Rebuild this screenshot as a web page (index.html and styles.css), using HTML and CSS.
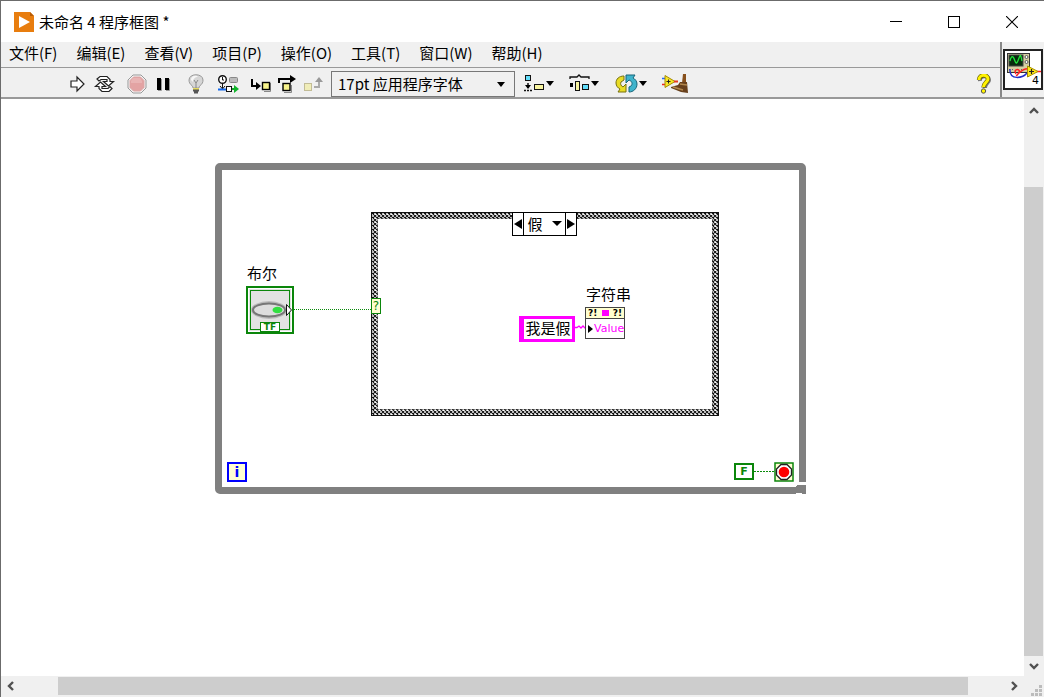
FILE: index.html
```html
<!DOCTYPE html>
<html lang="zh-CN">
<head>
<meta charset="utf-8">
<title>未命名 4 程序框图 *</title>
<link rel="stylesheet" href="styles.css">
</head>
<body>
<div class="window">
  <header class="titlebar">
    <svg class="app-icon" width="20" height="20" viewBox="0 0 20 20"><path d="M0 0H16L20 4V20H0Z" fill="#e87d0e"/><path d="M16 0L20 4H16Z" fill="#b85c05"/><path d="M5 4L16 10L5 16Z" fill="#fff"/></svg>
    <h1 class="title">未命名 4 程序框图 *</h1>
    <div class="window-controls">
      <button class="win-btn" aria-label="最小化"><svg width="12" height="12"><path d="M0 5.500H12" stroke="#000"/></svg></button>
      <button class="win-btn" aria-label="最大化"><svg width="12" height="12"><rect x=".5" y=".5" width="11" height="11" fill="none" stroke="#000"/></svg></button>
      <button class="win-btn" aria-label="关闭"><svg width="12" height="12"><path d="M0 0L12 12M12 0L0 12" stroke="#000" stroke-width="1.100"/></svg></button>
    </div>
  </header>

  <div class="header">
    <div class="bars">
      <nav class="menubar">
        <button class="menu">文件(F)</button><button class="menu">编辑(E)</button><button class="menu">查看(V)</button><button class="menu">项目(P)</button><button class="menu">操作(O)</button><button class="menu">工具(T)</button><button class="menu">窗口(W)</button><button class="menu">帮助(H)</button>
      </nav>
      <div class="toolbar">
        <div class="tools">
          <div class="group">
            <button class="tool" aria-label="运行"><svg width="24" height="20"><path d="M5 7H11V3L18 10L11 17V13H5Z" fill="#fff" stroke="#222" stroke-width="1.200"/></svg></button>
            <button class="tool" aria-label="连续运行"><svg width="24" height="20"><path d="M4 5L7 2.500H14L17 5.500V7.500H20.500L15.500 12L10.500 7.500H14V5.500H8L6 7Z" fill="#fff" stroke="#222" stroke-width="1.200"/><path d="M19 14.500L16 17.500H9L6 14.500V12.500H2.500L7.500 8L12.500 12.500H9V14.500H15L17 12.500Z" fill="#fff" stroke="#222" stroke-width="1.200"/></svg></button>
          </div>
          <div class="group">
            <button class="tool" aria-label="中止执行" disabled><svg width="24" height="20"><path d="M8 1H16L21 6V14L16 19H8L3 14V6Z" fill="#f4f4f4" stroke="#999"/><path d="M8.500 3H15.500L19 6.500V13.500L15.500 17H8.500L5 13.500V6.500Z" fill="#e3a3a3" stroke="#dba6a6"/><path d="M8 4H15L17 7V9H6V7Z" fill="#e9b4b4"/></svg></button>
            <button class="tool" aria-label="暂停"><svg width="24" height="20"><path d="M5 4H9V16H5ZM13 4H17V16H13Z" fill="#000"/><path d="M9.500 5V16.500H6M17.500 5V16.500H14" stroke="#999" fill="none"/></svg></button>
          </div>
          <div class="group">
            <button class="tool" aria-label="高亮显示执行过程"><svg width="24" height="20"><path d="M9 14C9 11 5 11 5 6C5-1 19-1 19 6C19 11 15 11 15 14Z" fill="#d6d6d6" stroke="#999"/><path d="M7 6C7 1 13 1 14 3C11 3 9 5 9 8Z" fill="#f6f6f6"/><path d="M10 6L12 9L14 6M12 9V14" stroke="#888" fill="none"/><path d="M9 14H15V16H9Z" fill="#e5da62"/><path d="M9 16.500H15M10 18.500H14" stroke="#555" stroke-width="2"/></svg></button>
          </div>
          <div class="group">
            <button class="tool" aria-label="保存连线值"><svg width="24" height="20"><circle cx="6.500" cy="5.500" r="3.800" fill="#fff" stroke="#111" stroke-width="1.400"/><path d="M6.500 3V6H8M6.500 9V15M4 12L6.500 15L9 12" stroke="#111" fill="none"/><rect x="13.500" y="3.500" width="8" height="5" rx="1" fill="#bbb" stroke="#888"/><path d="M2 15.500H10" stroke="#1368ed" stroke-width="2"/><rect x="10.500" y="12.500" width="5" height="5" fill="#fff" stroke="#111"/><path d="M16 15H20" stroke="#14a829" stroke-width="2"/><path d="M18 11L23 15L18 19Z" fill="#10b52b"/></svg></button>
          </div>
          <div class="group">
            <button class="tool" aria-label="单步步入"><svg width="24" height="20"><path d="M4 5V12H11" stroke="#000" stroke-width="2" fill="none"/><path d="M8 8L13 12L8 16Z"/><path d="M16 17.500H22.500V9" stroke="#888" fill="none"/><rect x="14.500" y="8.500" width="7" height="7" fill="#f8f48c" stroke="#000" stroke-width="1.400"/></svg></button>
            <button class="tool" aria-label="单步步过"><svg width="24" height="20"><path d="M4 9V5H17" stroke="#000" stroke-width="2" fill="none"/><path d="M15 1L21 5L15 9Z"/><path d="M9 18.500H16.500V11" stroke="#888" fill="none"/><rect x="8" y="9.500" width="7" height="7" fill="#f8f48c" stroke="#000" stroke-width="1.400"/></svg></button>
            <button class="tool" aria-label="单步步出" disabled><svg width="24" height="20"><rect x="2.500" y="9.500" width="7" height="7" fill="#f0edb8" stroke="#c2bc96"/><path d="M12 13H17V7" stroke="#aaa" stroke-width="2" fill="none"/><path d="M13 8L17 3L21 8Z" fill="#999"/></svg></button>
          </div>
        </div>
        <label class="font-picker">
          <select class="font-select" aria-label="文本设置"><option>17pt 应用程序字体</option></select>
          <svg class="font-arrow" width="8" height="5"><path d="M0 0H8L4 5Z"/></svg>
        </label>
        <div class="layout-tools">
          <button class="wide-tool" aria-label="对齐对象"><svg width="32" height="20"><rect x="2.500" y="1.500" width="5" height="5" fill="#62ddfa" stroke="#111"/><path d="M5 9V14M1 16.500H9" stroke="#111" stroke-width="1.500" stroke-dasharray="2 1"/><path d="M2 11H8L5 15Z"/><rect x="11.500" y="10.500" width="9" height="5" fill="#f7f4a0" stroke="#111"/><path d="M23 7H31L27 12Z"/></svg></button>
          <button class="wide-tool" aria-label="分布对象"><svg width="32" height="20"><path d="M1 5V3H8L10 1L12 3H20V5" stroke="#111" fill="none" stroke-width="1.300"/><path d="M1 9H4V13H1Z"/><rect x="6.500" y="7.500" width="4" height="9" fill="#f7f4a0" stroke="#111"/><rect x="13.500" y="10.500" width="6" height="5" fill="#62ddfa" stroke="#111"/><path d="M22 7H30L26 12Z"/></svg></button>
          <button class="wide-tool" aria-label="重新排序"><svg width="32" height="20"><path d="M9 2C4 2 1 5 1 9C1 12 3 14 5 15L3 18H11V10L8 13C6 12 5 10 6 8L9 6Z" fill="#e9dc25" stroke="#76710d"/><path d="M14 18C18 18 22 15 22 10C22 7 20 5 18 4L20 1H11V9L14 6C17 7 18 10 16 12L14 13Z" fill="#40b4cc" stroke="#176579"/><path d="M24 7H32L28 12Z"/></svg></button>
          <button class="wide-tool" aria-label="整理程序框图"><svg width="32" height="20"><path d="M1 4.500H5" stroke="#26f" stroke-width="1.500"/><path d="M1 10.500H5" stroke="#e22" stroke-width="1.500"/><path d="M4 1.500L14 7.500L4 13.500Z" fill="#f8e626" stroke="#a58a05"/><path d="M7.500 5.500V9.500M5.500 7.500H9.500" stroke="#222"/><path d="M13 7.500H17" stroke="#e63b20" stroke-width="2"/><path d="M22 0L25 0L25 9H21Z" fill="#87501c"/><path d="M10 13L17 11L19 8H26L27 19L20 18L10 14Z" fill="#68401c"/><path d="M12 13L22 16M19 10L26 11" stroke="#b2874d" stroke-width="1.500"/></svg></button>
        </div>
        <button class="help" aria-label="显示即时帮助"><svg width="16" height="20"><path d="M4 7C3 1 13 1 13 6C13 9 9 9 9 14" fill="none" stroke="#777" stroke-width="4"/><path d="M3 6C3 0 12 0 12 5C12 8 7.500 9 7.500 13.500" fill="none" stroke="#6d6700" stroke-width="4.400"/><path d="M3 6C3 0 12 0 12 5C12 8 7.500 9 7.500 13" fill="none" stroke="#fff200" stroke-width="3"/><circle cx="7.500" cy="17" r="2.200" fill="#fff200" stroke="#555"/></svg></button>
      </div>
    </div>
    <div class="vi-pane">
      <button class="vi-icon" aria-label="VI 图标">
        <svg width="36" height="37"><rect x="2.500" y="2.500" width="22" height="19" fill="#d5cfa2" stroke="#333"/><rect x="4" y="4" width="14" height="11" fill="#062c0c" stroke="#444"/><path d="M5 10C7 2 9 7 10 10S12 13 14 7S16 7 17 10" fill="none" stroke="#21e43a" stroke-width="1.300"/><circle cx="21.500" cy="6" r="1.500" fill="#fff" stroke="#555"/><circle cx="21.500" cy="11" r="1.500" fill="#fff" stroke="#555"/><path d="M4 18.500H8M16 18.500H20" stroke="#666" stroke-dasharray="1 2"/><path d="M5 18C4 30 18 27 22 22" fill="none" stroke="#222fc8" stroke-width="1.500"/><path d="M11 23C7 17 18 17 13 23S17 16 24 18M31 20.500H36" fill="none" stroke="#f22" stroke-width="1.500"/><path d="M22.500 15L33 20.500L22.500 26Z" fill="#ffe815" stroke="#a79100"/><path d="M26.500 18V23M24 20.500H29" stroke="#222" stroke-width="1.200"/></svg>
        <span class="vi-number">4</span>
      </button>
    </div>
  </div>

  <div class="workspace">
    <main class="canvas">
      <section class="while-loop" aria-label="While 循环"></section>
      <svg class="loop-corner" width="13" height="13"><path d="M0 0H13V13H0Z" fill="#fff"/><path d="M3 0H10V1H3ZM0 5H1V4H10V13H6V12H0Z" fill="#808080"/></svg>

      <svg class="case-frame" width="348" height="204">
        <defs><pattern id="chain" width="4" height="4" patternUnits="userSpaceOnUse"><rect width="4" height="4" fill="#fff"/><path d="M0 0L4 4M4 0L0 4" stroke="#111" stroke-width="1.100"/></pattern></defs>
        <path d="M0 0H348V204H0ZM7 7V197H341V7Z" fill="url(#chain)" fill-rule="evenodd"/>
        <path d="M.5.5H347.500V203.500H.5Z" fill="none" stroke="#111"/>
        <path d="M6.500 6.500H341.500V197.500H6.500Z" fill="none" stroke="#444" stroke-dasharray="2 2"/>
      </svg>
      <div class="case-selector">
        <button class="case-step" aria-label="上一分支"><svg width="8" height="10"><path d="M8 0V10L0 5Z"/></svg></button>
        <button class="case-label">假<svg width="10" height="6"><path d="M0 0H10L5 5Z"/></svg></button>
        <button class="case-step" aria-label="下一分支"><svg width="8" height="10"><path d="M0 0V10L8 5Z"/></svg></button>
      </div>

      <svg class="wire-bool" width="78" height="2"><path d="M0 .5H78" stroke="#0a8a0a" stroke-dasharray="1 1"/></svg>
      <span class="case-terminal">?</span>

      <span class="label label-bool">布尔</span>
      <div class="bool-node">
        <svg width="48" height="48">
          <rect x="1" y="1" width="46" height="46" fill="#e2e2e2" stroke="#0b860b" stroke-width="2"/>
          <rect x="2.500" y="2.500" width="43" height="43" fill="none" stroke="#fff"/>
          <rect x="4.500" y="4.500" width="39" height="39" fill="none" stroke="#0b860b"/>
          <ellipse cx="23" cy="24" rx="18" ry="9" fill="#bbb"/>
          <ellipse cx="23" cy="24" rx="16" ry="6.500" fill="#ddd" stroke="#777" stroke-width="2"/>
          <ellipse cx="31.500" cy="24" rx="5" ry="3.200" fill="#32df41"/>
          <path d="M40.500 18.500L45.500 24L40.500 29.500Z" fill="#fff" stroke="#111"/>
        </svg>
        <span class="bool-type">TF</span>
      </div>

      <span class="label label-string">字符串</span>
      <input class="string-constant" value="我是假" aria-label="字符串常量">
      <svg class="wire-string" width="12" height="5"><path d="M0 2.500H2L4 1L6 3L8 1L10 3L12 2" fill="none" stroke="#f0f" stroke-width="1.300"/></svg>
      <div class="property-node">
        <div class="property-head"><span>?!</span><i class="property-dot"></i><span>?!</span></div>
        <div class="property-row"><svg width="5" height="8"><path d="M0 0L5 4L0 8Z"/></svg><span>Value</span></div>
      </div>

      <span class="iteration">i</span>
      <button class="false-constant">F</button>
      <svg class="wire-stop" width="20" height="2"><path d="M0 .5H20" stroke="#0a8a0a" stroke-dasharray="2 1"/></svg>
      <svg class="stop-node" width="20" height="20"><rect x="1" y="1" width="18" height="18" fill="#ffffd2" stroke="#0b860b" stroke-width="1.500"/><path d="M7 2.500H13L17.500 7V13L13 17.500H7L2.500 13V7Z" fill="#fff" stroke="#222" stroke-width="1.300"/><circle cx="10" cy="10" r="5.300" fill="#f00"/></svg>
    </main>
    <div class="scroll-v">
      <button class="arrow arrow-up" aria-label="向上滚动"><svg width="10" height="8"><path d="M1 6L5 2L9 6" fill="none" stroke="#505050" stroke-width="2.400"/></svg></button>
      <div class="track-v"><div class="thumb-v"></div></div>
      <button class="arrow" aria-label="向下滚动"><svg width="10" height="8"><path d="M1 2L5 6L9 2" fill="none" stroke="#505050" stroke-width="2.400"/></svg></button>
    </div>
    <div class="scroll-h">
      <button class="arrow" aria-label="向左滚动"><svg width="8" height="10"><path d="M6 1L2 5L6 9" fill="none" stroke="#505050" stroke-width="2.400"/></svg></button>
      <div class="track-h"><div class="thumb-h"></div></div>
      <button class="arrow" aria-label="向右滚动"><svg width="8" height="10"><path d="M2 1L6 5L2 9" fill="none" stroke="#505050" stroke-width="2.400"/></svg></button>
    </div>
    <div class="grip"><svg width="11" height="11"><path d="M8 0H11V3H8ZM4 4H7V7H4ZM8 4H11V7H8ZM0 8H3V11H0ZM4 8H7V11H4ZM8 8H11V11H8Z" fill="#bcbcbc"/></svg></div>
  </div>
</div>
</body>
</html>
```

FILE: styles.css
```css
* { box-sizing: border-box; }
body {
  margin: 0;
  color: #000;
  font: 15px/20px "Noto Sans CJK SC", sans-serif;
}
button, select, input { margin: 0; padding: 0; border: 0; background: none; color: inherit; font: inherit; border-radius: 0; }
svg { display: block; flex: none; }

.window {
  display: flex;
  flex-direction: column;
  height: 100vh;
  border-top: 1px solid #6b6b6b;
  border-left: 1px solid #6b6b6b;
  overflow: hidden;
  background: #fff;
}

.titlebar { display: flex; align-items: center; height: 41px; padding-left: 13px; flex: none; }
.title { margin: 0 auto 0 5px; font-size: 15px; font-weight: 400; }
.window-controls { display: flex; padding-right: 3px; }
.win-btn { display: flex; align-items: center; justify-content: center; width: 58px; height: 40px; }

.header { display: flex; height: 57px; flex: none; background: #f0f0f0; border-bottom: 2px solid #999; }
.bars { flex: 1; display: flex; flex-direction: column; border-right: 2px solid #888; }
.menubar { display: flex; gap: 19px; height: 26px; padding: 0 8px 3px; border-bottom: 1px solid #999; align-items: center; }
.menu { white-space: nowrap; }
.toolbar { display: flex; flex: 1; align-items: center; padding: 2px 8px 0 65px; }
.tools { display: flex; gap: 8px; }
.group { display: flex; gap: 3px; }
.font-picker { position: relative; width: 184px; margin: 0 8px 0 5px; }
.font-select { display: block; appearance: none; width: 100%; height: 26px; padding: 0 24px 0 6px; border: 1px solid #777; line-height: 20px; }
.font-arrow { position: absolute; right: 10px; top: 11px; pointer-events: none; }
.layout-tools { display: flex; gap: 14px; }
.help { margin-left: auto; }
.vi-pane { width: 42px; padding: 7px 1px 0; }
.vi-icon { display: block; position: relative; width: 40px; height: 41px; border: 2px solid #222; background: #fff; }
.vi-number { position: absolute; right: 2px; bottom: 0; font: 11px/14px "DejaVu Sans", sans-serif; }

.workspace { flex: 1; display: grid; grid-template-columns: 1fr 20px; grid-template-rows: 1fr 21px; min-height: 0; }
.canvas { position: relative; overflow: hidden; background: #fff; }
.arrow { display: flex; align-items: center; justify-content: center; width: 20px; height: 20px; flex: none; }
.scroll-v { display: flex; flex-direction: column; background: #f0f0f0; }
.arrow-up { height: 24px; }
.track-v { flex: 1; padding: 64px 1px 0 0; }
.thumb-v { height: 100%; background: #cdcdcd; }
.scroll-h { display: flex; background: #f0f0f0; }
.track-h { flex: 1; padding: 1px 36px 2px 37px; }
.thumb-h { height: 100%; background: #cdcdcd; }
.grip { display: flex; align-items: flex-end; justify-content: flex-end; padding: 0 2px 1px 0; background: #f0f0f0; }

.while-loop { position: absolute; left: 214px; top: 64px; width: 591px; height: 331px; border: 7px solid #808080; border-radius: 5px; }
.loop-corner { position: absolute; left: 795px; top: 382px; }
.case-frame { position: absolute; left: 370px; top: 113px; }
.case-selector { position: absolute; left: 511px; top: 113px; display: flex; width: 65px; height: 24px; border: 1px solid #000; background: #fff; }
.case-step { display: flex; align-items: center; justify-content: center; width: 10px; }
.case-label { flex: 1; display: flex; align-items: center; justify-content: center; gap: 9px; border: solid #000; border-width: 0 1px; }
.wire-bool { position: absolute; left: 293px; top: 210px; }
.case-terminal { position: absolute; left: 370px; top: 199px; width: 10px; height: 16px; border: 1px solid #0b860b; background: #ffffd2; color: #0b860b; font: 12px/14px "DejaVu Sans", sans-serif; text-align: center; }

.label { position: absolute; white-space: nowrap; }
.label-bool { left: 246px; top: 164px; }
.label-string { left: 585px; top: 185px; }
.bool-node { position: absolute; left: 245px; top: 187px; }
.bool-type { position: absolute; left: 14px; bottom: 2px; width: 20px; height: 10px; border: 1px solid #0b860b; background: #fff; color: #0b860b; font: bold 9px/9px "DejaVu Sans", sans-serif; text-align: center; }
.string-constant { position: absolute; left: 518px; top: 217px; width: 56px; height: 26px; padding-bottom: 3px; border: 3px solid #f0f; border-left-width: 5px; background: #fff; line-height: 17px; text-align: center; }
.wire-string { position: absolute; left: 574px; top: 226px; }
.property-node { position: absolute; left: 584px; top: 208px; width: 40px; height: 32px; border: 1px solid #444; background: #fff; }
.property-head { display: flex; align-items: center; justify-content: space-between; height: 11px; padding: 0 2px; background: #ffffcf; border-bottom: 1px solid #444; font: bold 9px/10px "DejaVu Sans", sans-serif; }
.property-dot { width: 7px; height: 6px; background: #f0f; }
.property-row { display: flex; align-items: center; gap: 1px; height: 19px; padding-left: 2px; color: #f0f; font: 11px/18px "DejaVu Sans", sans-serif; }

.iteration { position: absolute; left: 226px; top: 363px; width: 20px; height: 20px; border: 2px solid #00f; background: #ffffd2; color: #00f; font: bold 14px/16px "DejaVu Sans", sans-serif; text-align: center; }
.false-constant { position: absolute; left: 733px; top: 364px; width: 20px; height: 17px; border: 2px solid #0b860b; background: #fff; color: #0b860b; font: bold 11px/13px "DejaVu Sans", sans-serif; text-align: center; }
.wire-stop { position: absolute; left: 753px; top: 372px; }
.stop-node { position: absolute; left: 773px; top: 363px; }
```
